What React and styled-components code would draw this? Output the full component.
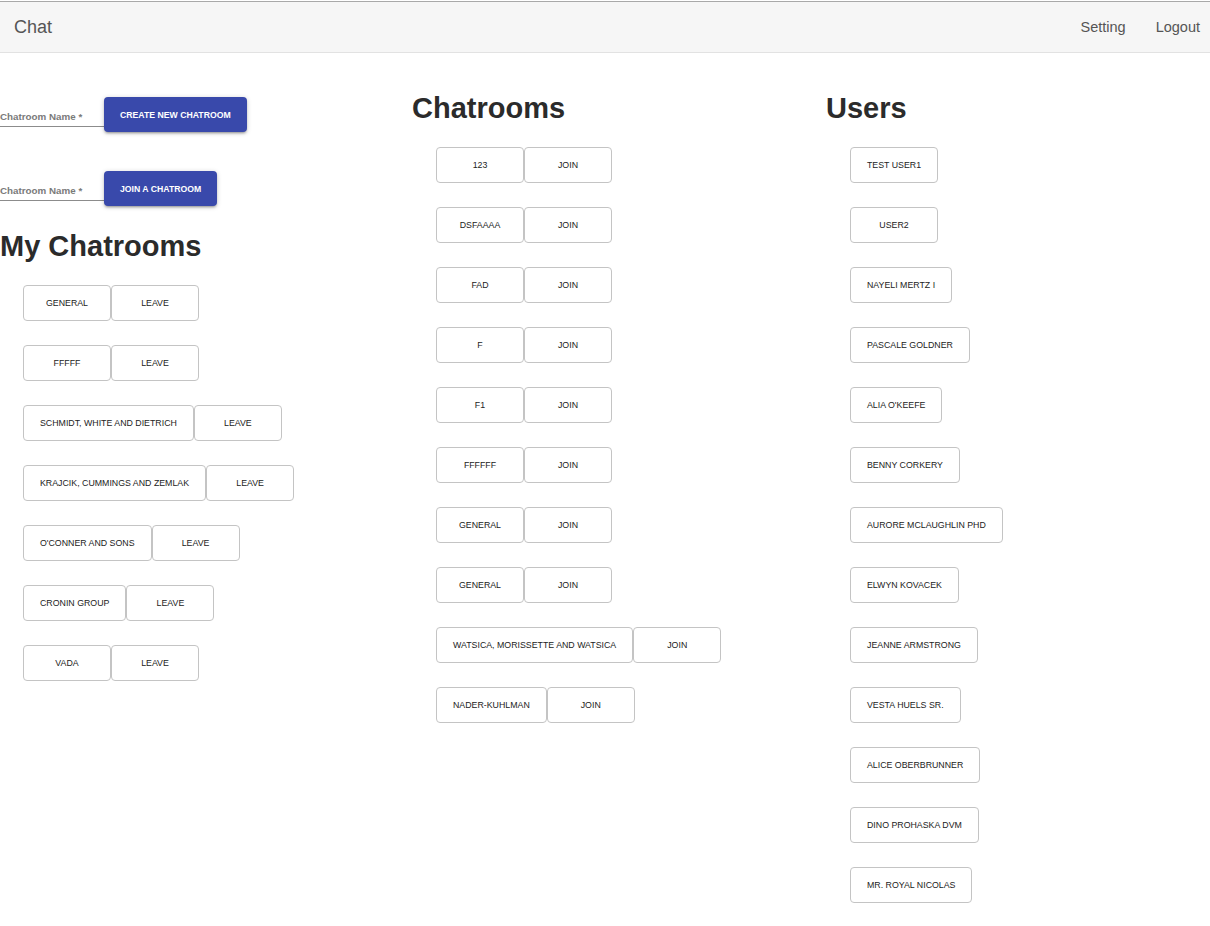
import React from "react";
import styled, { createGlobalStyle } from "styled-components";

const Global = createGlobalStyle`
  html, body { margin: 0; padding: 0; background: #fff; }
  body { font-family: "Liberation Sans", Arial, sans-serif; color: #333; }
  * { box-sizing: border-box; }
`;

const Nav = styled.nav`
  margin-top: 1px;
  height: 52px;
  border-top: 1px solid #a9a9a9;
  border-bottom: 1px solid #e2e2e2;
  background: #f6f6f6;
  display: flex;
  align-items: center;
  justify-content: space-between;
  padding: 0 10px 0 14px;
`;

const Brand = styled.div`
  font-size: 18px;
  color: #555;
`;

const NavLinks = styled.div`
  display: flex;
  gap: 30px;
`;

const NavLink = styled.a`
  font-size: 14.5px;
  color: #555;
  text-decoration: none;
`;

const Main = styled.main`
  display: grid;
  grid-template-columns: 412px 414px 1fr;
  align-items: start;
`;

const Column = styled.section`
  padding-top: ${(p) => p.$top}px;
`;

const FormRow = styled.div`
  display: flex;
  align-items: flex-end;
  margin-bottom: ${(p) => p.$mb}px;
`;

const Field = styled.div`
  width: 104px;
  margin-bottom: 5px;
  padding-bottom: 3px;
  border-bottom: 1px solid #8c8c8c;
`;

const FieldLabel = styled.label`
  display: block;
  font-size: 9.8px;
  font-weight: 700;
  color: #7a7a7a;
  line-height: 12px;
`;

const PrimaryButton = styled.button`
  height: 35px;
  padding: 0 16px;
  border: none;
  border-radius: 4px;
  background: #3949ab;
  color: #fff;
  font-family: "Liberation Sans", Arial, sans-serif;
  font-size: 8.7px;
  font-weight: 700;
  text-transform: uppercase;
  box-shadow: 0 1px 5px rgba(0, 0, 0, 0.2), 0 2px 2px rgba(0, 0, 0, 0.14),
    0 3px 1px -2px rgba(0, 0, 0, 0.12);
  cursor: pointer;
`;

const Heading = styled.h2`
  margin: 0;
  font-size: 29px;
  line-height: 34px;
  font-weight: 700;
  color: #2b2b2b;
`;

const List = styled.div`
  padding: 22px 0 0 ${(p) => p.$indent}px;
  display: flex;
  flex-direction: column;
  align-items: flex-start;
  gap: 24px;
`;

const Row = styled.div`
  display: flex;
`;

const ItemButton = styled.button`
  min-width: 88px;
  height: 36px;
  padding: 0 16px;
  background: #fff;
  border: 1px solid #c4c4c4;
  border-radius: 4px;
  font-family: "Liberation Sans", Arial, sans-serif;
  font-size: 8.8px;
  color: #222;
  text-transform: uppercase;
  white-space: nowrap;
  cursor: pointer;
`;

const myRooms = [
  "General",
  "fffff",
  "Schmidt, White and Dietrich",
  "Krajcik, Cummings and Zemlak",
  "O'Conner and Sons",
  "Cronin Group",
  "vada",
];

const rooms = [
  "123",
  "dsfaaaa",
  "fad",
  "f",
  "f1",
  "ffffff",
  "General",
  "General",
  "Watsica, Morissette and Watsica",
  "Nader-Kuhlman",
];

const users = [
  "test user1",
  "user2",
  "Nayeli Mertz I",
  "Pascale Goldner",
  "Alia O'Keefe",
  "Benny Corkery",
  "Aurore McLaughlin PhD",
  "Elwyn Kovacek",
  "Jeanne Armstrong",
  "Vesta Huels Sr.",
  "Alice Oberbrunner",
  "Dino Prohaska DVM",
  "Mr. Royal Nicolas",
];

export default function App() {
  return (
    <>
      <Global />
      <Nav>
        <Brand>Chat</Brand>
        <NavLinks>
          <NavLink href="#">Setting</NavLink>
          <NavLink href="#">Logout</NavLink>
        </NavLinks>
      </Nav>
      <Main>
        <Column $top={44}>
          <FormRow $mb={39}>
            <Field>
              <FieldLabel>Chatroom Name *</FieldLabel>
            </Field>
            <PrimaryButton>Create new chatroom</PrimaryButton>
          </FormRow>
          <FormRow $mb={23}>
            <Field>
              <FieldLabel>Chatroom Name *</FieldLabel>
            </Field>
            <PrimaryButton>Join a chatroom</PrimaryButton>
          </FormRow>
          <Heading>My Chatrooms</Heading>
          <List $indent={23}>
            {myRooms.map((r, i) => (
              <Row key={i}>
                <ItemButton>{r}</ItemButton>
                <ItemButton>Leave</ItemButton>
              </Row>
            ))}
          </List>
        </Column>
        <Column $top={38}>
          <Heading>Chatrooms</Heading>
          <List $indent={24}>
            {rooms.map((r, i) => (
              <Row key={i}>
                <ItemButton>{r}</ItemButton>
                <ItemButton>Join</ItemButton>
              </Row>
            ))}
          </List>
        </Column>
        <Column $top={38}>
          <Heading>Users</Heading>
          <List $indent={24}>
            {users.map((u, i) => (
              <Row key={i}>
                <ItemButton>{u}</ItemButton>
              </Row>
            ))}
          </List>
        </Column>
      </Main>
    </>
  );
}
